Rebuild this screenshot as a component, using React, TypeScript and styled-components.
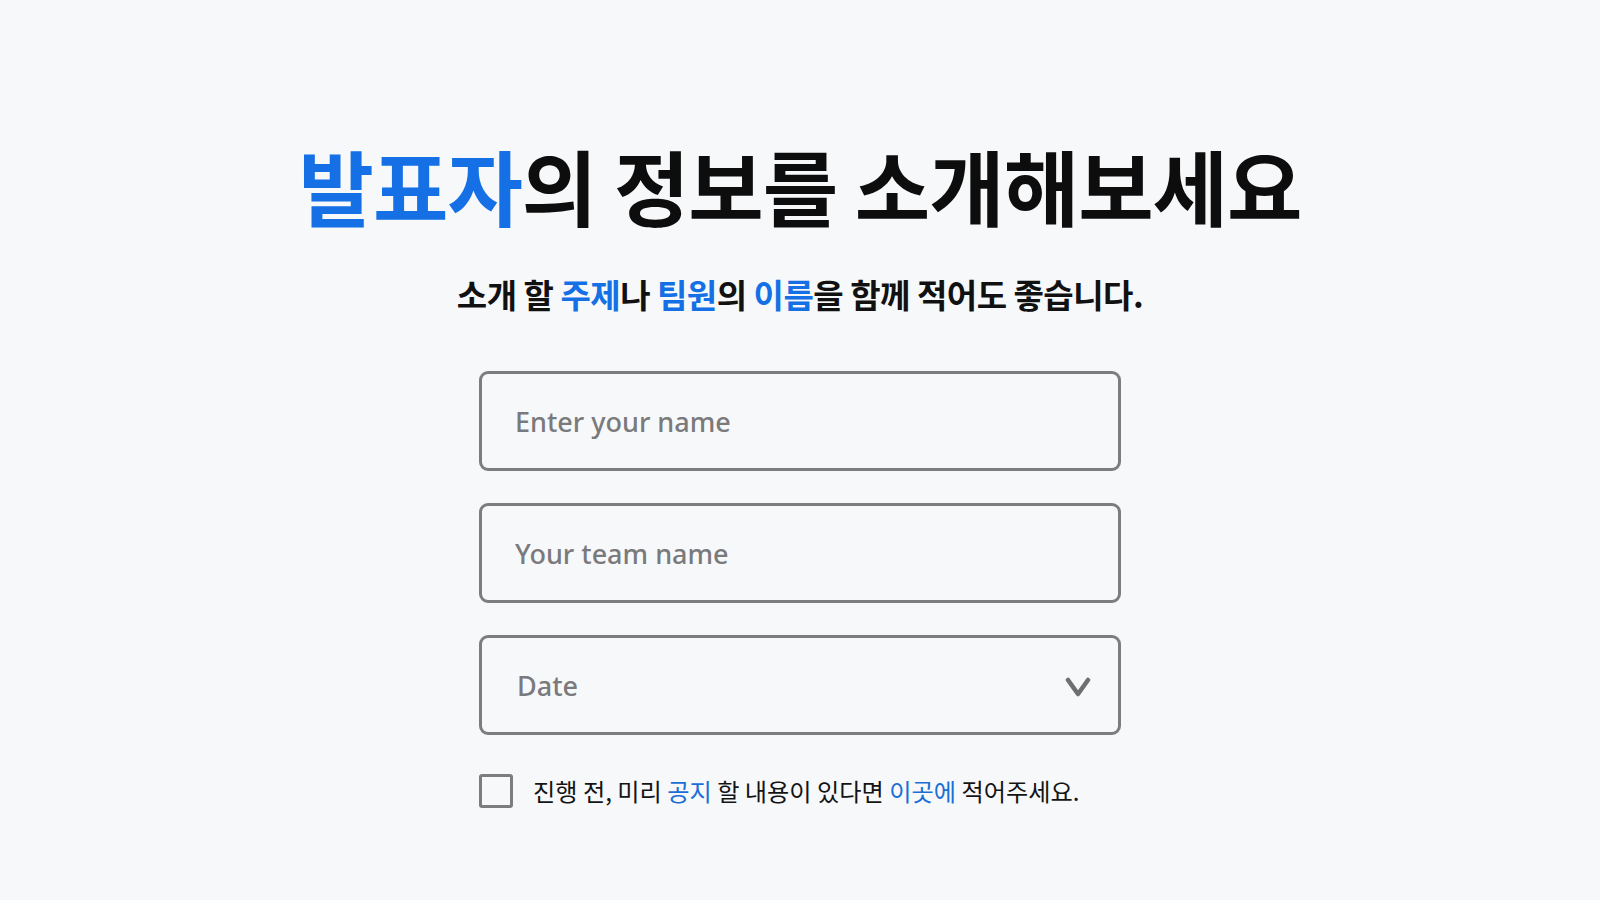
import React from "react";
import styled, { createGlobalStyle } from "styled-components";

const GlobalStyle = createGlobalStyle`
	* {
		box-sizing: border-box;
	}
	html, body {
		margin: 0;
		padding: 0;
		background: #f7f8fa;
	}
	body {
		font-family: "Noto Sans", "Noto Sans CJK KR", sans-serif;
		color: #111;
	}
`;

const BLUE = "#1570e6";

export default function App() {
	return (
		<>
			<GlobalStyle />
			<Page>
				<Title>
					<Accent>발표자</Accent>의 정보를 소개해보세요
				</Title>
				<Subtitle>
					소개 할 <Accent>주제</Accent>나 <Accent>팀원</Accent>의{" "}
					<Accent>이름</Accent>을 함께 적어도 좋습니다.
				</Subtitle>
				<Form>
					<Field placeholder="Enter your name" />
					<Field placeholder="Your team name" />
					<SelectBox>
						<SelectLabel>Date</SelectLabel>
						<Chevron viewBox="0 0 26 22">
							<path d="M3 4 L13 18 L23 4" />
						</Chevron>
					</SelectBox>
					<CheckRow>
						<CheckBox type="checkbox" />
						<CheckText>
							진행 전, 미리 <Link>공지</Link> 할 내용이 있다면{" "}
							<Link>이곳에</Link> 적어주세요.
						</CheckText>
					</CheckRow>
				</Form>
			</Page>
		</>
	);
}

const Page = styled.main`
	display: flex;
	flex-direction: column;
	align-items: center;
	width: 1600px;
	height: 900px;
	padding-top: 140px;
`;

const Accent = styled.span`
	color: ${BLUE};
`;

const Title = styled.h1`
	margin: 0;
	font-family: "Noto Sans CJK KR", sans-serif;
	font-size: 82px;
	font-weight: 700;
	letter-spacing: -1px;
	line-height: 1.1;
	color: #0d0d0d;
`;

const Subtitle = styled.p`
	margin: 43px 0 0;
	font-family: "Noto Sans CJK KR", sans-serif;
	font-size: 33px;
	font-weight: 700;
	letter-spacing: -0.5px;
	line-height: 1.3;
	color: #111;
`;

const Form = styled.div`
	display: flex;
	flex-direction: column;
	gap: 32px;
	width: 642px;
	margin-top: 55px;
`;

const Field = styled.input`
	width: 100%;
	height: 100px;
	padding: 0 33px;
	border: 3px solid #7d7d7f;
	border-radius: 9px;
	background: #f7f8fa;
	font-family: "Noto Sans", sans-serif;
	font-size: 27px;
	font-weight: 500;
	color: #333;
	outline: none;
	&::placeholder {
		color: #7a7a7c;
	}
`;

const SelectBox = styled.div`
	display: flex;
	align-items: center;
	justify-content: space-between;
	height: 100px;
	padding: 0 27px 0 35px;
	border: 3px solid #7d7d7f;
	border-radius: 9px;
	cursor: pointer;
`;

const SelectLabel = styled.span`
	font-size: 27px;
	font-weight: 500;
	color: #7a7a7c;
`;

const Chevron = styled.svg`
	width: 26px;
	height: 22px;
	margin-top: 4px;
	fill: none;
	stroke: #6f6f72;
	stroke-width: 4.5;
	stroke-linecap: round;
	stroke-linejoin: round;
`;

const CheckRow = styled.label`
	display: flex;
	align-items: center;
	gap: 20px;
	margin-top: 6px;
`;

const CheckBox = styled.input`
	appearance: none;
	margin: 0;
	width: 34px;
	height: 34px;
	border: 3px solid #7d7d7f;
	border-radius: 3px;
	background: #f7f8fa;
	flex-shrink: 0;
`;

const CheckText = styled.span`
	font-family: "Noto Sans CJK KR", sans-serif;
	font-size: 24.2px;
	font-weight: 400;
	letter-spacing: 0;
	color: #141414;
`;

const Link = styled.span`
	color: #1a6fd6;
`;
